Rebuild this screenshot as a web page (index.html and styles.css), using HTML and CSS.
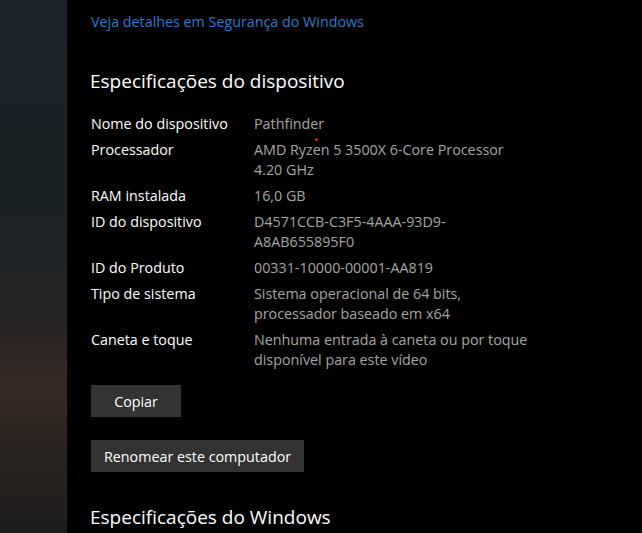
FILE: index.html
```html
<!DOCTYPE html>
<html lang="pt-BR">
<head>
    <meta charset="UTF-8">
    <meta name="viewport" content="width=device-width, initial-scale=1.0">
    <title>Sobre</title>
    <link rel="stylesheet" href="styles.css">
</head>
<body>
    <div class="window">
        <div class="backdrop"></div>
        <main class="content">
            <a class="link" href="#">Veja detalhes em Segurança do Windows</a>

            <h2 class="section-title">Especificações do dispositivo</h2>
            <dl class="specs">
                <div class="row"><dt>Nome do dispositivo</dt><dd>Pathfinder<span class="dot"></span></dd></div>
                <div class="row"><dt>Processador</dt><dd>AMD Ryzen 5 3500X 6-Core Processor<br>4.20 GHz</dd></div>
                <div class="row"><dt>RAM instalada</dt><dd>16,0 GB</dd></div>
                <div class="row"><dt>ID do dispositivo</dt><dd>D4571CCB-C3F5-4AAA-93D9-<br>A8AB655895F0</dd></div>
                <div class="row"><dt>ID do Produto</dt><dd>00331-10000-00001-AA819</dd></div>
                <div class="row"><dt>Tipo de sistema</dt><dd>Sistema operacional de 64 bits,<br>processador baseado em x64</dd></div>
                <div class="row"><dt>Caneta e toque</dt><dd>Nenhuma entrada à caneta ou por toque<br>disponível para este vídeo</dd></div>
            </dl>

            <button class="btn btn-copy">Copiar</button>
            <button class="btn btn-rename">Renomear este computador</button>

            <h2 class="section-title windows-title">Especificações do Windows</h2>
        </main>
    </div>
</body>
</html>
```

FILE: styles.css
```css
html, body { margin: 0; height: 100%; background-color: #000; overflow: hidden; }
body { font-family: "Open Sans", "Noto Sans", sans-serif; color: #fff; font-size: 14.3px; }

.window { display: flex; height: 100%; }
.backdrop {
    flex: 0 0 67px;
    background: linear-gradient(180deg, #1b2328 0%, #1b2226 40%, #252324 60%, #3a2a24 73%, #2a2320 83%, #1e1e1e 100%);
}

.content { flex: 1; padding: 12px 0 0 24px; display: flex; flex-direction: column; align-items: flex-start; }

.link { color: #2b7bcf; text-decoration: none; line-height: 20px; }

.section-title { margin: 35px 0 0 -1px; font-size: 19px; font-weight: 400; line-height: 28px; }

.specs { margin: 19px 0 0; }
.row { display: flex; margin-bottom: 6px; line-height: 20px; }
.row dt { width: 163px; }
.row dd { margin: 0; color: #a6a6a6; position: relative; }
.dot { position: absolute; left: 61px; top: 24px; width: 3px; height: 3px; border-radius: 50%; background-color: #d22; }

.btn {
    font: inherit; color: #fff; background-color: #333;
    border: none; height: 32px; min-width: 90px; padding: 0 13px;
}
.btn-copy { margin-top: 9px; }
.btn-rename { margin-top: 23px; }

.windows-title { margin-top: 31px; }
```
